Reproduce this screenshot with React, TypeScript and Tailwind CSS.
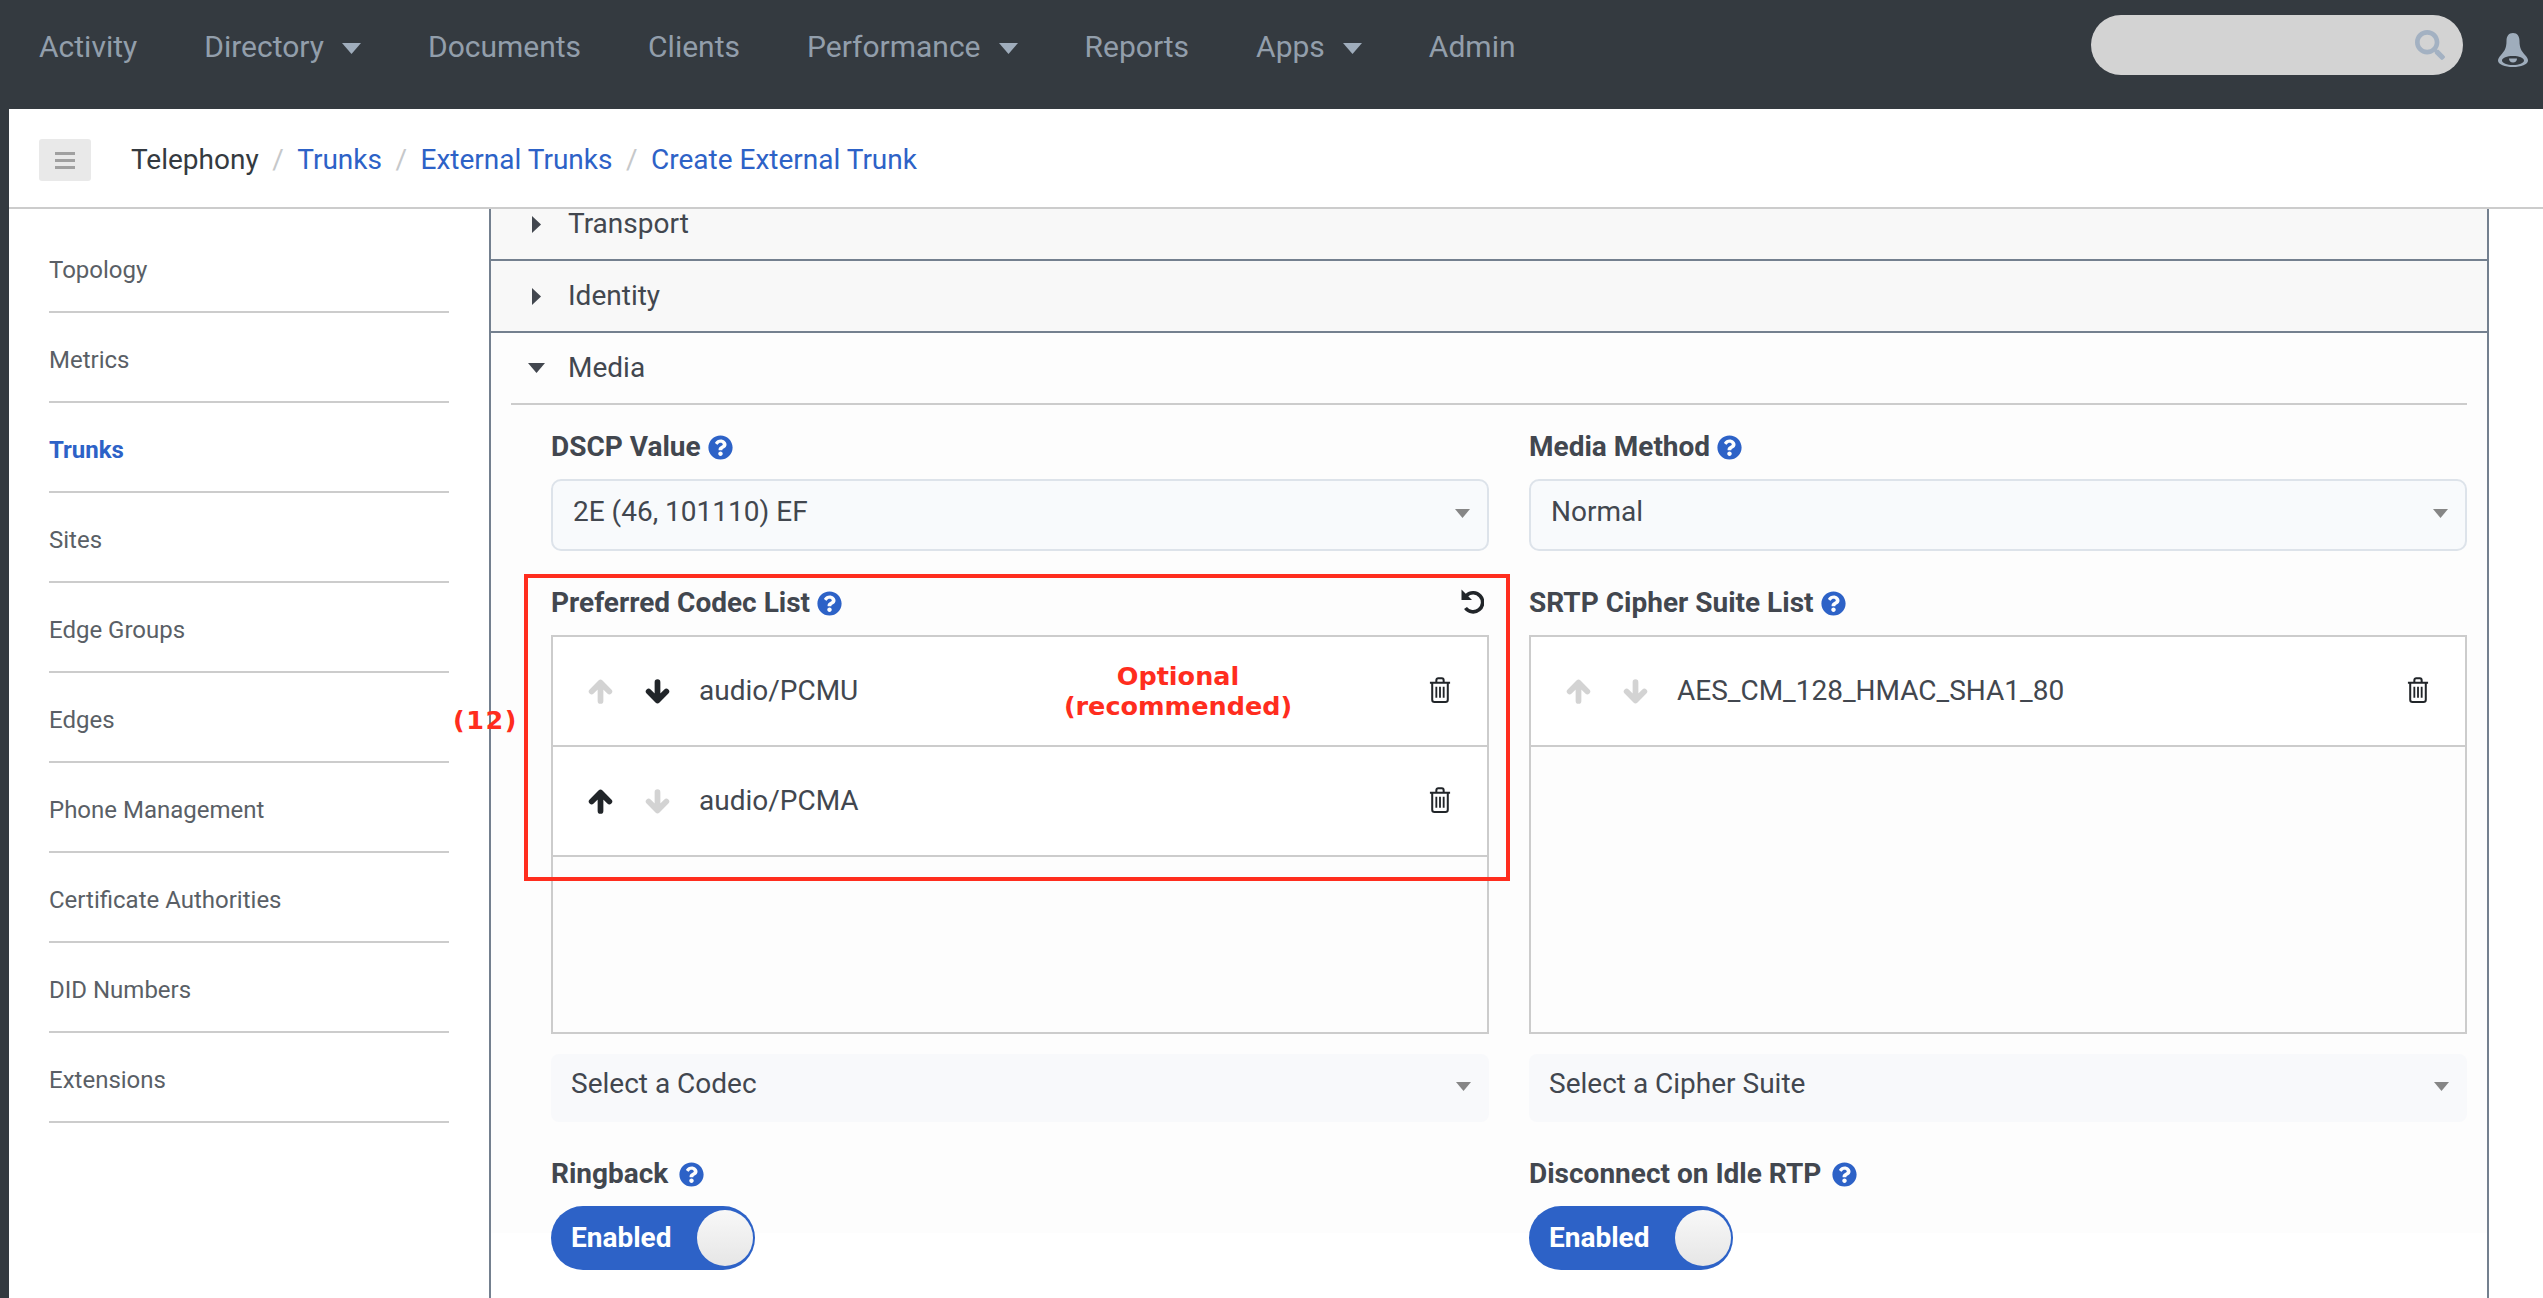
import React from "react";
import { FaSearch, FaQuestionCircle } from "react-icons/fa";

const Caret = ({ className = "" }: { className?: string }) => (
  <svg viewBox="0 0 10 6" className={className} fill="currentColor" preserveAspectRatio="none"><path d="M0 0h10L5 6z" /></svg>
);

const Help = ({ className = "" }: { className?: string }) => (
  <FaQuestionCircle className={"text-[#2d62c7] text-[25px] shrink-0 " + className} />
);

const Arrow = ({ dir, on, className = "" }: { dir: "up" | "down"; on: boolean; className?: string }) => (
  <svg
    viewBox="0 0 24 24"
    className={"w-[25px] h-[25px] " + (dir === "down" ? "rotate-180 " : "") + (on ? "text-[#212529] " : "text-[#d3d3d3] ") + className}
    fill="none"
    stroke="currentColor"
    strokeWidth="5.5"
    strokeLinecap="round"
    strokeLinejoin="round"
  >
    <path d="M12 21V5M3.500 12L12 3.500L20.500 12" />
  </svg>
);

const Undo = () => (
  <svg viewBox="0 0 24 26" className="w-[24px] h-[26px] text-[#212529]" fill="none" stroke="currentColor" strokeWidth="3.6">
    <path d="M6.500 7.500A9.500 9.500 0 1 1 5.500 20" />
    <path d="M1.500 1.500V12H12z" fill="currentColor" stroke="none" />
  </svg>
);

const Trash = () => (
  <svg viewBox="0 0 24 28" className="w-[22px] h-[26px] text-[#212529]" fill="none" stroke="currentColor" strokeWidth="2.2">
    <path d="M1 6h22M8 6V3.500C8 2 9 1.200 10 1.200h4c1 0 2 .8 2 2.300V6M3.500 6v18.500c0 1.500 1 2.500 2.500 2.500h12c1.500 0 2.500-1 2.500-2.500V6" />
    <path d="M8 10.500v12M12 10.500v12M16 10.500v12" strokeWidth="2" />
  </svg>
);

const Bell = () => (
  <svg viewBox="0 0 30 34" className="w-[30px] h-[34px] text-[#9fadbc]" fill="currentColor">
    <path fillRule="evenodd" d="M15 0c4.500 0 6.500 3.500 6.500 8 0 7 2 10 5.500 14 2 2.300 3 4 3 5.500C30 31.500 23 34 15 34S0 31.500 0 27.500C0 26 1 24.300 3 22c3.500-4 5.500-7 5.500-14C8.500 3.500 10.500 0 15 0zM15 23c-6 0-11 2-11 4.500S9 32 15 32s11-2 11-4.500S21 23 15 23z" />
    <path d="M11 25.500h8c0 2.500-1.700 4-4 4s-4-1.500-4-4z" />
  </svg>
);

const nav: [string, boolean][] = [
  ["Activity", false], ["Directory", true], ["Documents", false], ["Clients", false],
  ["Performance", true], ["Reports", false], ["Apps", true], ["Admin", false],
];

const side = ["Topology", "Metrics", "Trunks", "Sites", "Edge Groups", "Edges", "Phone Management", "Certificate Authorities", "DID Numbers", "Extensions"];

const Row = ({ up, down, text }: { up: boolean; down: boolean; text: string }) => (
  <div className="h-[110px] border-b-2 border-[#cccccc] flex items-center bg-white pl-[35px] pr-[36px]">
    <Arrow dir="up" on={up} />
    <Arrow dir="down" on={down} className="ml-[32px]" />
    <span className="ml-[29px] text-[28px] text-[#42474f]">{text}</span>
    <span className="ml-auto flex -mt-[2px]"><Trash /></span>
  </div>
);

const Label = ({ children }: { children: React.ReactNode }) => (
  <div className="flex items-center gap-[7px] font-bold text-[28px] leading-[36px] text-[#42474f]">
    {children}
    <Help />
  </div>
);

const Select = ({ text }: { text: string }) => (
  <div className="h-[72px] rounded-[10px] border-2 border-[#dde3ea] bg-[#f8fafc] flex items-center pl-[20px] pr-[17px] mt-[14px]">
    <span className="text-[28px] text-[#42474f] -mt-[7px]">{text}</span>
    <Caret className="ml-auto w-[15px] h-[9px] -mt-[3px] text-[#868686]" />
  </div>
);

const Lookup = ({ text }: { text: string }) => (
  <div className="h-[68px] rounded-[8px] bg-[#f8f9fb] flex items-center pl-[20px] pr-[18px] mt-[20px]">
    <span className="text-[28px] text-[#42474f] -mt-[8px]">{text}</span>
    <Caret className="ml-auto w-[15px] h-[9px] -mt-[3px] text-[#868686]" />
  </div>
);

const Toggle = () => (
  <div className="mt-[14px] w-[204px] h-[64px] rounded-[32px] bg-[#2d62c7] flex items-center pl-[20px] pr-[2px]">
    <span className="text-white font-bold text-[28px]">Enabled</span>
    <span className="ml-auto w-[56px] h-[56px] rounded-full bg-gradient-to-b from-[#f8f8f8] to-[#e6e6e6]" />
  </div>
);

const PanelHead = ({ name }: { name: string }) => (
  <div className="h-[26px] flex items-center pl-[37px]">
    <Caret className="w-[17px] h-[9px] -rotate-90 text-[#42474f]" />
    <span className="ml-[23px] text-[28px] leading-[26px] text-[#42474f]">{name}</span>
  </div>
);

export default function App() {
  return (
    <div className="w-[2543px] h-[1298px] overflow-hidden bg-[#343a40] font-['Roboto',sans-serif] flex flex-col relative">
      <header className="h-[109px] shrink-0 flex items-center text-[#929eab] pl-[39px] pr-[15px]">
        <nav className="flex items-center gap-[67px] text-[30px] -mt-[16px]">
          {nav.map(([n, c]) => (
            <span key={n} className="flex items-center">
              {n}
              {c && <Caret className="w-[19px] h-[11px] ml-[18px] mt-[3px] text-[#9fadbc]" />}
            </span>
          ))}
        </nav>
        <div className="ml-auto flex items-center -mt-[19px]">
          <div className="w-[372px] h-[60px] rounded-[30px] bg-[#d3d3d3] flex items-center justify-end pr-[18px]">
            <FaSearch className="text-[30px] text-[#a3b1c2]" />
          </div>
          <div className="ml-[35px] mt-[10px] flex"><Bell /></div>
        </div>
      </header>

      <div className="flex-1 min-h-0 ml-[9px] bg-white flex flex-col">
        <div className="h-[100px] shrink-0 border-b-2 border-[#cccccc] flex items-center pl-[30px] pt-[4px]">
          <div className="w-[52px] h-[42px] rounded-[3px] bg-[#e9e9e9] flex flex-col items-center justify-center gap-[4px]">
            <i className="block w-[20px] h-[3px] bg-[#a0a0a0]" />
            <i className="block w-[20px] h-[3px] bg-[#a0a0a0]" />
            <i className="block w-[20px] h-[3px] bg-[#a0a0a0]" />
          </div>
          <div className="ml-[40px] flex items-center text-[28px]">
            <span className="text-[#343a40]">Telephony</span>
            <span className="text-[#c6c8ca] mx-[13.500px]">/</span>
            <span className="text-[#2d62c7]">Trunks</span>
            <span className="text-[#c6c8ca] mx-[13.500px]">/</span>
            <span className="text-[#2d62c7]">External Trunks</span>
            <span className="text-[#c6c8ca] mx-[13.500px]">/</span>
            <span className="text-[#2d62c7]">Create External Trunk</span>
          </div>
        </div>

        <div className="flex-1 min-h-0 flex">
          <aside className="w-[480px] shrink-0 pl-[40px] pt-[14px]">
            {side.map((s) => (
              <div key={s} className={"w-[400px] h-[90px] border-b-2 border-[#cccccc] flex items-center text-[24px] " + (s === "Trunks" ? "font-bold text-[#2d62c7]" : "text-[#5a5f66]")}>
                <span className="mt-[5px]">{s}</span>
              </div>
            ))}
          </aside>

          <main className="w-[2000px] shrink-0 border-x-2 border-[#74808f]">
            <div className="h-[52px] pt-[2px] border-b-2 border-[#74808f] bg-[#f8f8f8]">
              <PanelHead name="Transport" />
            </div>
            <div className="h-[72px] border-b-2 border-[#74808f] bg-[#f8f8f8] flex items-center">
              <PanelHead name="Identity" />
            </div>
            <section className="bg-[#fdfdfd] h-[900px]">
              <div className="mx-[20px] h-[72px] border-b-2 border-[#cccccc] flex items-center pl-[17px]">
                <Caret className="w-[17px] h-[10px] text-[#42474f]" />
                <span className="ml-[23px] text-[28px] text-[#42474f]">Media</span>
              </div>
              <div className="grid grid-cols-[938px_938px] gap-x-[40px] pl-[60px] pt-[24px]">
                <div>
                  <Label>DSCP Value</Label>
                  <Select text="2E (46, 101110) EF" />
                </div>
                <div>
                  <Label>Media Method</Label>
                  <Select text="Normal" />
                </div>

                <div className="mt-[34px]">
                  <div className="flex items-center justify-between">
                    <Label>Preferred Codec List</Label>
                    <span className="flex mr-[5px] -mt-[4px]"><Undo /></span>
                  </div>
                  <div className="mt-[14px] h-[399px] border-2 border-[#cccccc]">
                    <Row up={false} down={true} text="audio/PCMU" />
                    <Row up={true} down={false} text="audio/PCMA" />
                  </div>
                  <Lookup text="Select a Codec" />
                </div>
                <div className="mt-[34px]">
                  <Label>SRTP Cipher Suite List</Label>
                  <div className="mt-[14px] h-[399px] border-2 border-[#cccccc]">
                    <Row up={false} down={false} text="AES_CM_128_HMAC_SHA1_80" />
                  </div>
                  <Lookup text="Select a Cipher Suite" />
                </div>

                <div className="mt-[34px]">
                  <div className="flex items-center gap-[8px] font-bold text-[28px] leading-[36px] text-[#42474f]">Ringback <Help className="ml-[3px]" /></div>
                  <Toggle />
                </div>
                <div className="mt-[34px]">
                  <div className="flex items-center gap-[8px] font-bold text-[28px] leading-[36px] text-[#42474f]">Disconnect on Idle RTP <Help className="ml-[3px]" /></div>
                  <Toggle />
                </div>
              </div>
            </section>
          </main>
        </div>
      </div>

      {/* annotation overlay */}
      <div className="absolute left-[524px] top-[574px] w-[986px] h-[307px] border-[4px] border-[#ff2d1e] pointer-events-none" />
      <div className="absolute left-[453px] top-[704px] font-['DejaVu_Sans',sans-serif] font-bold text-[25.5px] tracking-[1.5px] leading-[32px] text-[#ff2d1e]">(12)</div>
      <div className="absolute left-[978px] top-[661px] w-[400px] text-center font-['DejaVu_Sans',sans-serif] font-bold text-[25.5px] leading-[30px] text-[#ff2d1e]">
        Optional<br />(recommended)
      </div>
    </div>
  );
}
